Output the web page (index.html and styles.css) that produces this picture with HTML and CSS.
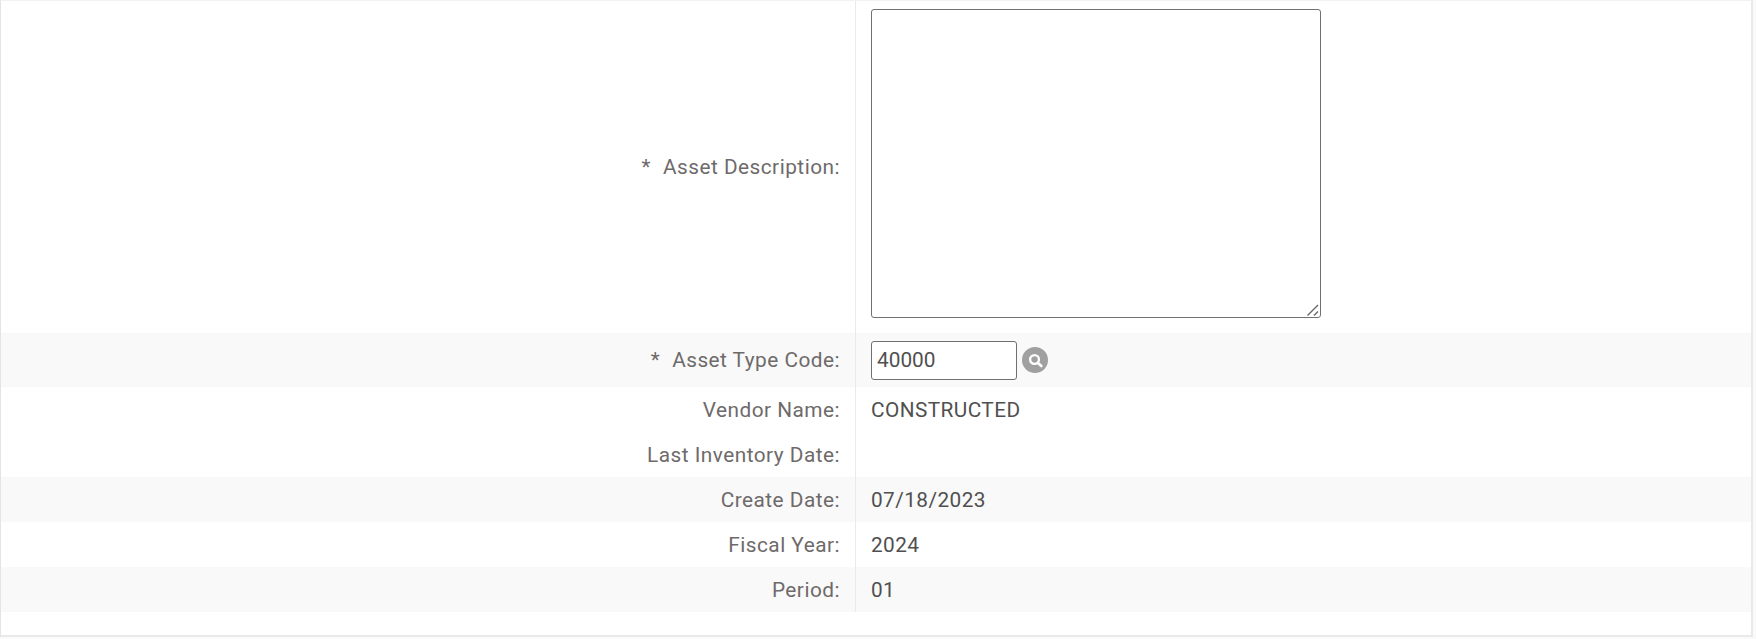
FILE: index.html
```html
<!DOCTYPE html>
<html lang="en">
<head>
<meta charset="utf-8">
<title>Asset</title>
<link rel="stylesheet" href="styles.css">
</head>
<body>
<main class="panel">
  <div class="row row-tall">
    <div class="label"><span class="req">*</span>Asset Description:</div>
    <div class="value value-top">
      <div class="area-wrap">
        <textarea class="area"></textarea>
        <svg class="grip" viewBox="0 0 12 12" width="12" height="12"><path d="M0.5 11.5L11 1M7 11.5L11 7.5" stroke="#666" stroke-width="1.4" fill="none"/></svg>
      </div>
    </div>
  </div>
  <div class="row row-input alt">
    <div class="label"><span class="req">*</span>Asset Type Code:</div>
    <div class="value">
      <input class="code" type="text" value="40000">
      <span class="lookup"><svg viewBox="0 0 27 27" width="26" height="26"><circle cx="13.5" cy="13.5" r="13.5" fill="#a0a0a0"/><circle cx="13" cy="13" r="4.6" fill="none" stroke="#fff" stroke-width="2.4"/><path d="M16.5 16.5l3.6 3.2" stroke="#fff" stroke-width="2.8" stroke-linecap="round"/></svg></span>
    </div>
  </div>
  <div class="row"><div class="label">Vendor Name:</div><div class="value">CONSTRUCTED</div></div>
  <div class="row"><div class="label">Last Inventory Date:</div><div class="value"></div></div>
  <div class="row alt"><div class="label">Create Date:</div><div class="value">07/18/2023</div></div>
  <div class="row"><div class="label">Fiscal Year:</div><div class="value">2024</div></div>
  <div class="row alt"><div class="label">Period:</div><div class="value">01</div></div>
</main>
</body>
</html>
```
FILE: styles.css
```css
html, body { margin: 0; padding: 0; background: #fafafa; }
body { font-family: Roboto, "Liberation Sans", sans-serif; font-size: 20.8px; letter-spacing: .42px; height: 639px; overflow: hidden; }
.panel { box-sizing: border-box; height: 637px; margin-right: 3px; background: #fff; border: 2px solid #e9e9e9; border-left: 1px solid #e4e4e4; border-top: 1px solid #f2f2f2; padding-bottom: 24px; }
.row { display: flex; height: 45px; align-items: stretch; }
.row-tall { height: 332px; }
.row-input { height: 54px; }
.alt { background: #f9f9f9; }
.label { box-sizing: border-box; width: 855px; padding-right: 15px; border-right: 1px solid #e6ecec; display: flex; align-items: center; justify-content: flex-end; color: #6e6a6a; letter-spacing: .48px; }
.req { margin-right: 12px; }
.value { flex: 1; padding-left: 15px; display: flex; align-items: center; color: #505050; }
.value-top { align-items: flex-start; padding-top: 8px; }
.area-wrap { position: relative; width: 450px; height: 309px; }
.area { box-sizing: border-box; width: 100%; height: 100%; margin: 0; border: 1px solid #707070; border-radius: 3px; background: #fff; display: block; resize: none; }
.grip { position: absolute; right: 2px; bottom: 2px; }
.code { box-sizing: border-box; width: 146px; height: 39px; padding: 0 5px; border: 1px solid #707070; border-radius: 3px; background: #fff; font: inherit; letter-spacing: 0; color: #505050; }
.lookup { margin-left: 5px; display: flex; }
```
